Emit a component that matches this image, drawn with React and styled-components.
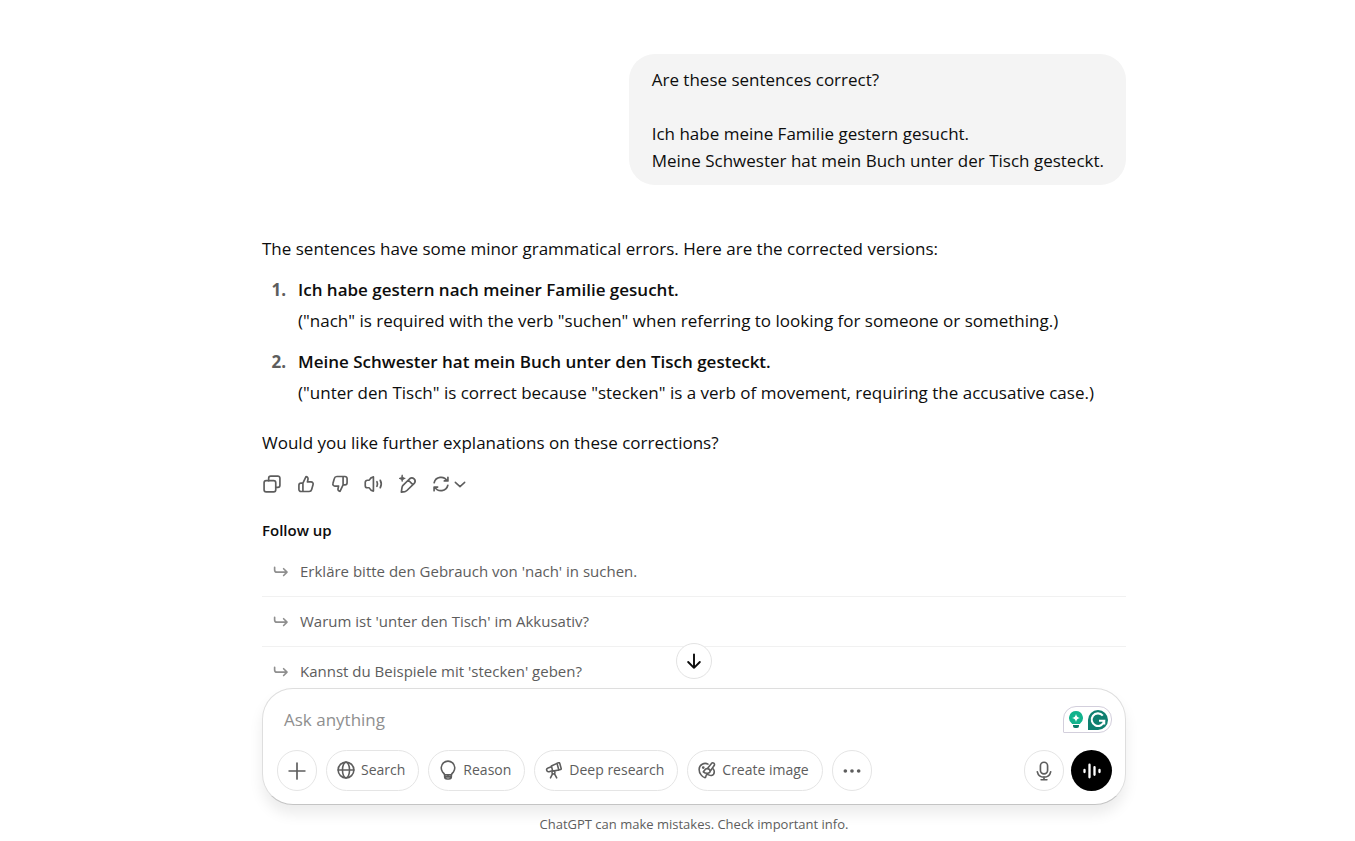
import React from "react";
import styled, { createGlobalStyle, css } from "styled-components";

const GlobalStyle = createGlobalStyle`
  *, *::before, *::after { box-sizing: border-box; }
  html, body, #root { height: 100%; }
  body {
    margin: 0;
    overflow: hidden;
    background: #fff;
    color: #0d0d0d;
    font-family: "Segoe UI", "Open Sans", "Noto Sans", sans-serif;
    font-size: 17px;
  }
  button, textarea { font: inherit; color: inherit; }
  p, ol, ul, h2 { margin: 0; padding: 0; }
`;

const Page = styled.div`
  height: 100vh;
  display: flex;
  flex-direction: column;
  padding-left: 33px;
`;

const Thread = styled.main`
  position: relative;
  flex: 1;
  min-height: 0;
  overflow: hidden;
  padding-top: 54px;
`;

const Column = styled.div`
  width: 100%;
  max-width: 864px;
  margin: 0 auto;
  display: flex;
  flex-direction: column;
`;

const UserBubble = styled.div`
  align-self: flex-end;
  padding: 12px 22px 11px 23px;
  border-radius: 26px;
  background: #f4f4f4;
  line-height: 27px;
  white-space: pre-wrap;
`;

const Answer = styled.article`
  margin-top: 48px;
  line-height: 31px;
`;

const Corrections = styled.ol`
  list-style: none;
  counter-reset: item;
  margin: 10px 0 19px;
  display: flex;
  flex-direction: column;
  gap: 10px;
`;

const Correction = styled.li`
  counter-increment: item;
  display: grid;
  grid-template-columns: 24px 1fr;
  column-gap: 12px;
  &::before {
    content: counter(item) ".";
    text-align: right;
    font-weight: 700;
    color: #5d5d5d;
  }
`;

const Sentence = styled.strong`
  display: block;
  font-weight: 600;
`;

const Actions = styled.div`
  display: flex;
  align-items: center;
  margin: 9px 0 0 -7px;
  color: #5d5d5d;
`;

const ActionButton = styled.button`
  display: flex;
  align-items: center;
  justify-content: center;
  gap: 1px;
  width: ${(p) => (p.$wide ? "49px" : "34px")};
  height: 34px;
  padding: 0;
  border: 0;
  background: none;
`;

const FollowUpTitle = styled.h2`
  margin-top: 17px;
  font-size: 15px;
  font-weight: 600;
  line-height: 24px;
`;

const FollowUpList = styled.ul`
  list-style: none;
  margin-top: 5px;
`;

const FollowUpItem = styled.li`
  border-bottom: 1px solid #f1f1f1;
  &:last-child { border-bottom: 0; }
`;

const FollowUpButton = styled.button`
  width: 100%;
  height: 49px;
  display: flex;
  align-items: center;
  gap: 10px;
  padding: 0 10px 1px;
  border: 0;
  background: none;
  font-size: 15px;
  color: #5d5d5d;
  text-align: left;
`;

const ScrollButton = styled.button`
  position: absolute;
  left: 50%;
  bottom: 9px;
  transform: translateX(-50%);
  width: 36px;
  height: 36px;
  display: flex;
  align-items: center;
  justify-content: center;
  padding: 0;
  border: 1px solid #e3e3e3;
  border-radius: 50%;
  background: #fff;
`;

const Composer = styled.form`
  display: flex;
  flex-direction: column;
  justify-content: space-between;
  height: 117px;
  padding: 17px 13px 13px 14px;
  border: 1px solid #dedede;
  border-bottom-color: #c4c4c4;
  border-radius: 31px;
  background: #fff;
  box-shadow: 0 9px 14px rgba(0, 0, 0, 0.08);
`;

const Bar = styled.div`
  display: flex;
  align-items: center;
  justify-content: space-between;
`;

const Group = styled.div`
  display: flex;
  align-items: center;
  gap: ${(p) => p.$gap}px;
`;

const Prompt = styled.textarea`
  flex: 1;
  height: 26px;
  padding: 0 7px;
  border: 0;
  outline: 0;
  resize: none;
  overflow: hidden;
  background: none;
  line-height: 26px;
  &::placeholder { color: #8f8f8f; opacity: 1; }
`;

const WritingBadge = styled.span`
  display: flex;
  align-items: center;
  gap: 4px;
  width: 49px;
  height: 27px;
  padding: 0 3px 0 4px;
  border: 1px solid #d3cfdc;
  border-radius: 13px 13px 13px 1px;
`;

const round = css`
  width: 40px;
  justify-content: center;
  padding: 0;
`;

const Pill = styled.button`
  height: 41px;
  display: flex;
  align-items: center;
  gap: 6px;
  padding: 0 13px 2px 10px;
  border: 1px solid #e5e5e5;
  border-radius: 21px;
  background: #fff;
  color: #5d5d5d;
  font-size: 14px;
  font-weight: 500;
  white-space: nowrap;
  ${(p) => p.$round && round}
`;

const VoiceButton = styled.button`
  width: 41px;
  height: 41px;
  display: flex;
  align-items: center;
  justify-content: center;
  padding: 0;
  border: 0;
  border-radius: 50%;
  background: #000;
  color: #fff;
`;

const Disclaimer = styled.footer`
  padding: 9px 0 7px;
  font-size: 13px;
  line-height: 20px;
  text-align: center;
  color: #5d5d5d;
`;

const Icon = ({ size = 20, w = 2, children, ...rest }) => (
  <svg width={size} height={size} viewBox="0 0 24 24" fill="none" stroke="currentColor"
    strokeWidth={w} strokeLinecap="round" strokeLinejoin="round" aria-hidden="true" {...rest}>
    {children}
  </svg>
);

const CopyIcon = () => (
  <Icon>
    <rect x="2.5" y="8" width="14" height="13.500" rx="2.5" />
    <path d="M8 8V5a2.500 2.500 0 0 1 2.500-2.500H19A2.500 2.500 0 0 1 21.500 5v8.500A2.500 2.500 0 0 1 19 16h-2.500" />
  </Icon>
);
const ThumbPath = () => (
  <path d="M8.300 11 12 3.200c1.700 0 2.800 1.400 2.400 3.100L13.700 9.500h4.400c1.700 0 2.900 1.600 2.400 3.200l-1.700 5.900a3.200 3.200 0 0 1-3.100 2.400H6A2.500 2.500 0 0 1 3.500 18.500v-5A2.500 2.500 0 0 1 6 11h2.300v10" />
);
const UpIcon = () => <Icon><ThumbPath /></Icon>;
const DownIcon = () => <Icon><g transform="rotate(180 12 12)"><ThumbPath /></g></Icon>;
const SpeakerIcon = () => (
  <Icon>
    <path d="M11.300 3.500v17c-2.400-.4-4.200-2-5.100-4H4A2.500 2.500 0 0 1 1.500 14v-4A2.500 2.500 0 0 1 4 7.500h2.200c.9-2 2.700-3.600 5.100-4Z" />
    <path d="M15.500 9.200c.9 1.800.9 3.800 0 5.600M19.500 7.500c1.600 2.900 1.600 6.100 0 9" />
  </Icon>
);
const EditIcon = () => (
  <Icon>
    <path d="m5.700 14 8.300-8.300a3.900 3.900 0 0 1 5.500 5.500l-8.800 8.600c-.7.700-1.500 1.100-2.400 1.300l-4.300.7.600-4.300c.2-1.300.4-2.700 1.100-3.500ZM12.500 7.500l5 5" />
    <path d="M5 1.500c.5 2.400 1.300 3.300 3.700 3.800C6.300 5.800 5.500 6.700 5 9.100 4.500 6.700 3.700 5.800 1.300 5.300 3.700 4.800 4.500 3.900 5 1.500Z" fill="currentColor" strokeWidth="1" />
  </Icon>
);
const RefreshIcon = () => (
  <Icon>
    <path d="M3.800 10.500A8.400 8.400 0 0 1 19.300 8.300M20.300 4v4.300H16M20.200 13.500A8.400 8.400 0 0 1 4.700 15.700M3.700 20v-4.300H8" />
  </Icon>
);
const ChevronIcon = () => <Icon size={16} w={2.300}><path d="m5 9.500 7 6.500 7-6.500" /></Icon>;
const ReplyIcon = () => (
  <Icon size={18} w={2.200} color="#8f8f8f">
    <path d="M3.500 7v3.500a3 3 0 0 0 3 3H20M15.500 9l4.500 4.500-4.500 4.500" />
  </Icon>
);
const ArrowDownIcon = () => <Icon size={20} w={2.300}><path d="M12 4v16M5 13.200l7 7 7-7" /></Icon>;
const PlusIcon = () => <Icon size={20} w={2}><path d="M12 2.500v19M2.500 12h19" /></Icon>;
const GlobeIcon = () => (
  <Icon size={18} w={2.100}>
    <circle cx="12" cy="12" r="10.500" />
    <ellipse cx="12" cy="12" rx="4.700" ry="10.500" />
    <path d="M1.500 12h21" />
  </Icon>
);
const BulbIcon = () => (
  <Icon size={18} w={2.100} overflow="visible">
    <path d="M7.500 18.500c-.2-1.700-1.500-2.400-2.700-3.900a9 9 0 1 1 14.400 0c-1.200 1.500-2.500 2.200-2.700 3.900Z" />
    <path d="M7.500 18.500v2.200a3.300 3.300 0 0 0 3.300 3.300h2.400a3.300 3.300 0 0 0 3.300-3.300v-2.200M8 21.200h8M12 18.500v2" />
  </Icon>
);
const TelescopeIcon = () => (
  <Icon size={18} w={2.100}>
    <path d="m16 3 2.200-.7c.7-.2 1.200.1 1.400.8l2 6.800c.2.700-.1 1.200-.8 1.400l-2.400.8ZM16 3.200 8.500 6.700l1.800 6.800 8.100-1.500M8.500 7.700 4 9.200c-1.500.5-2.200 1.700-1.700 3.200.4 1.500 1.700 2.200 3.200 1.800l4-1.300" />
    <circle cx="11.300" cy="15.300" r="2" fill="#fff" />
    <path d="m10 17.200-2.700 5.300M12.700 17.200l2.900 5.300" />
  </Icon>
);
const BrushIcon = () => (
  <Icon size={18} w={2.100}>
    <path d="M13.300 4.200C8.500 1.500 1.500 5 1.500 11.200c0 5.500 4.500 10.300 7.300 10.900 2.600.4 1-2.900 2.800-4 1.600-1 3.500 1.700 6.400 1.200 3-.5 3.700-3 3.700-5 0-1.700-.6-2.900-1.400-3.700" />
    <path d="m12.300 10.200 5.700-7c1.900-2.100 5 .3 3.600 2.900l-5.400 7.600M12.300 10.200c-3.300-.3-3.100 2.700-5.300 4.300 3.200 2.600 9.300 2.400 9.200-.8-.1-2-1.700-3.400-3.900-3.500Z" />
    <circle cx="7" cy="8.800" r=".8" fill="currentColor" />
  </Icon>
);
const DotsIcon = () => (
  <Icon><g fill="currentColor" stroke="none"><circle cx="4" cy="12" r="2.200" /><circle cx="12" cy="12" r="2.200" /><circle cx="20" cy="12" r="2.200" /></g></Icon>
);
const MicIcon = () => (
  <Icon><rect x="7.700" y="1.500" width="8.600" height="14" rx="4.300" /><path d="M4 13a8.200 8.200 0 0 0 16 0M12 19v3.500M8.500 22.500h7" /></Icon>
);
const WaveIcon = () => (
  <Icon w={2.800}><path d="M3 10.800v2.400M9 4.500v15M15 7.500v9M21 10.800v2.400" /></Icon>
);
const TipIcon = () => (
  <svg width="16" height="18" viewBox="0 0 16 18" aria-hidden="true">
    <path d="M8 0a7 7 0 0 1 4 12.700V13H4v-.3A7 7 0 0 1 8 0Z" fill="#12b38d" />
    <path d="M5 14h6v1a2 2 0 0 1-2 2H7a2 2 0 0 1-2-2Z" fill="#087a68" />
    <path d="M8 3c.5 2.500 1.500 3.500 4 4-2.500.5-3.500 1.500-4 4-.5-2.500-1.500-3.500-4-4 2.500-.5 3.500-1.500 4-4Z" fill="#fff" />
  </svg>
);
const GrammarIcon = () => (
  <svg width="20" height="20" viewBox="0 0 20 20" aria-hidden="true">
    <path d="M10 0a10 10 0 1 1 0 20H0V10A10 10 0 0 1 10 0Z" fill="#0f7f70" />
    <path d="M14.800 5.600A6.300 6.300 0 1 0 16.200 10.800H11M16.200 10.800V14.500" fill="none" stroke="#fff" strokeWidth="2.100" />
  </svg>
);

const corrections = [
  ["Ich habe gestern nach meiner Familie gesucht.", '("nach" is required with the verb "suchen" when referring to looking for someone or something.)'],
  ["Meine Schwester hat mein Buch unter den Tisch gesteckt.", '("unter den Tisch" is correct because "stecken" is a verb of movement, requiring the accusative case.)'],
];

const actions = [
  ["Copy", CopyIcon],
  ["Good response", UpIcon],
  ["Bad response", DownIcon],
  ["Read aloud", SpeakerIcon],
  ["Edit in canvas", EditIcon],
];

const followUps = [
  "Erkläre bitte den Gebrauch von 'nach' in suchen.",
  "Warum ist 'unter den Tisch' im Akkusativ?",
  "Kannst du Beispiele mit 'stecken' geben?",
];

const tools = [
  ["Search", GlobeIcon],
  ["Reason", BulbIcon],
  ["Deep research", TelescopeIcon],
  ["Create image", BrushIcon],
];

export default function App() {
  return (
    <>
      <GlobalStyle />
      <Page>
        <Thread>
          <Column>
            <UserBubble>
              {"Are these sentences correct?\n\nIch habe meine Familie gestern gesucht.\nMeine Schwester hat mein Buch unter der Tisch gesteckt."}
            </UserBubble>
            <Answer>
              <p>The sentences have some minor grammatical errors. Here are the corrected versions:</p>
              <Corrections>
                {corrections.map(([sentence, note]) => (
                  <Correction key={sentence}>
                    <div>
                      <Sentence>{sentence}</Sentence>
                      <p>{note}</p>
                    </div>
                  </Correction>
                ))}
              </Corrections>
              <p>Would you like further explanations on these corrections?</p>
            </Answer>
            <Actions>
              {actions.map(([label, Glyph]) => (
                <ActionButton key={label} type="button" aria-label={label}><Glyph /></ActionButton>
              ))}
              <ActionButton $wide type="button" aria-label="Try again"><RefreshIcon /><ChevronIcon /></ActionButton>
            </Actions>
            <FollowUpTitle>Follow up</FollowUpTitle>
            <FollowUpList>
              {followUps.map((text) => (
                <FollowUpItem key={text}>
                  <FollowUpButton type="button"><ReplyIcon />{text}</FollowUpButton>
                </FollowUpItem>
              ))}
            </FollowUpList>
          </Column>
          <ScrollButton type="button" aria-label="Scroll to bottom"><ArrowDownIcon /></ScrollButton>
        </Thread>
        <Column>
          <Composer>
            <Bar>
              <Prompt rows={1} aria-label="Ask anything" placeholder="Ask anything" />
              <WritingBadge><TipIcon /><GrammarIcon /></WritingBadge>
            </Bar>
            <Bar>
              <Group $gap={9}>
                <Pill $round type="button" aria-label="Add"><PlusIcon /></Pill>
                {tools.map(([label, Glyph]) => (
                  <Pill key={label} type="button"><Glyph />{label}</Pill>
                ))}
                <Pill $round type="button" aria-label="More"><DotsIcon /></Pill>
              </Group>
              <Group $gap={7}>
                <Pill $round type="button" aria-label="Dictate"><MicIcon /></Pill>
                <VoiceButton type="button" aria-label="Voice mode"><WaveIcon /></VoiceButton>
              </Group>
            </Bar>
          </Composer>
        </Column>
        <Disclaimer>ChatGPT can make mistakes. Check important info.</Disclaimer>
      </Page>
    </>
  );
}
